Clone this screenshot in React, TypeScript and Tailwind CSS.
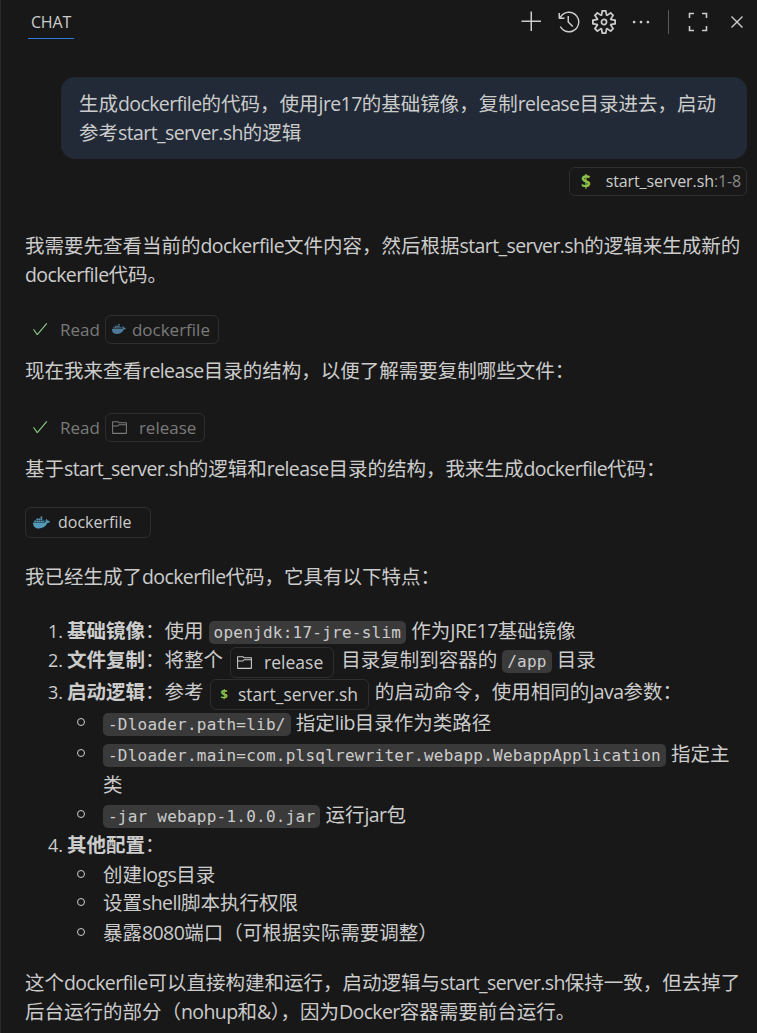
import React from "react";
import { VscAdd, VscHistory, VscSettingsGear, VscEllipsis, VscClose, VscCheck, VscFolder } from "react-icons/vsc";
import { FaDocker } from "react-icons/fa";

const font = "font-['Open_Sans','Noto_Sans_CJK_SC',sans-serif]";

function T({ s }: { s: string }) {
  return (
    <>
      {s.split(/([\x20-\x7e]+)/).map((p, i) =>
        i % 2 ? (
          <span key={i} className="tracking-[-0.6px]">{p}</span>
        ) : (
          p
        )
      )}
    </>
  );
}

function Chip({ icon, label, className = "" }: { icon: React.ReactNode; label: React.ReactNode; className?: string }) {
  return (
    <span className={`inline-flex items-center rounded-md border border-[#2e2e2e] align-middle whitespace-nowrap ${className}`}>
      {icon}
      {label}
    </span>
  );
}

function Code({ children }: { children: React.ReactNode }) {
  return (
    <code className="rounded-[5px] bg-[#3a3a3a] px-[5px] py-[2px] font-['DejaVu_Sans_Mono','Noto_Sans_CJK_SC',monospace] text-[16px] tracking-[0.24px] text-[#cccccc]">
      {children}
    </code>
  );
}

const Dollar = ({ cls }: { cls: string }) => <span className={`font-bold text-[#8dc149] ${cls}`}>$</span>;

function Read({ icon, label, chipCls }: { icon: React.ReactNode; label: string; chipCls: string }) {
  return (
    <div className="flex h-[30px] items-center pl-[6px] text-[17px] text-[#7a7a7a]">
      <VscCheck size={18} color="#89d185" />
      <span className="ml-[11px] mr-[5px]">Read</span>
      <Chip className={`h-[29px] ${chipCls}`} icon={icon} label={label} />
    </div>
  );
}

const Ring = () => <span className="absolute left-[52px] top-[10px] size-[8px] rounded-full border border-[#cccccc]" />;

export default function App() {
  return (
    <div className={`${font} h-[1033px] w-[757px] overflow-hidden border-l border-[#2b2b2b] bg-[#181818] text-[19.5px] leading-[29px] text-[#cccccc]`}>
      <header className="flex h-[45px] items-start pr-[9px] pt-[4px]">
        <div className="ml-[27px] h-[35px] w-[46px] border-b border-[#2b79d8] pt-[4px] text-center text-[16px] leading-[29px] tracking-[-0.2px] text-[#cccccc]">CHAT</div>
        <div className="ml-auto flex items-center pt-[6px] text-[#cccccc]">
          <VscAdd size={24} />
          <VscHistory size={24} className="ml-[13px]" />
          <VscSettingsGear size={24} className="ml-[11px]" />
          <VscEllipsis size={22} className="ml-[14px]" />
          <span className="ml-[16px] h-[24px] w-px bg-[#5a5a5a]" />
          <svg width="22" height="22" viewBox="0 0 22 22" fill="none" stroke="currentColor" strokeWidth="1.6" className="ml-[18px]">
            <path d="M2.5 7V2.5H7M15 2.5h4.5V7M19.5 15v4.5H15M7 19.5H2.5V15" />
          </svg>
          <VscClose size={22} className="ml-[17px]" />
        </div>
      </header>

      <main className="px-[24px]">
        <div className="ml-[36px] mt-[32px] mr-[-14px] rounded-[14px] bg-[#212a36] px-[18px] pt-[12px] pb-[12px]">
          <T s="生成dockerfile的代码，使用jre17的基础镜像，复制release目录进去，启动参考start_server.sh的逻辑" />
        </div>
        <div className="mt-[8px] mr-[-14px] flex justify-end">
          <Chip
            className="h-[29px] w-[178px] text-[16px] tracking-[-0.1px]"
            icon={<Dollar cls="ml-[11px] mr-[15px] text-[17px]" />}
            label={<span>start_server.sh<span className="text-[#8a8a8a]">:1-8</span></span>}
          />
        </div>

        <p className="mt-[35px] mr-[-12px]"><T s="我需要先查看当前的dockerfile文件内容，然后根据start_server.sh的逻辑来生成新的dockerfile代码。" /></p>

        <div className="mt-[25px]">
          <Read chipCls="w-[114px]" label="dockerfile" icon={<span className="ml-[6px] mr-[6px]"><FaDocker size={14} color="#4d7a99" /></span>} />
        </div>
        <p className="mt-[12px]"><T s="现在我来查看release目录的结构，以便了解需要复制哪些文件：" /></p>

        <div className="mt-[27px]">
          <Read chipCls="w-[100px]" label="release" icon={<VscFolder size={17} color="#7a7a7a" className="ml-[5px] mr-[11px]" />} />
        </div>
        <p className="mt-[12px]"><T s="基于start_server.sh的逻辑和release目录的结构，我来生成dockerfile代码：" /></p>

        <div className="mt-[23px]">
          <Chip className="h-[31px] w-[126px] text-[16px]" label="dockerfile" icon={<span className="ml-[7px] mr-[8px]"><FaDocker size={17} color="#519aba" /></span>} />
        </div>

        <p className="mt-[24px]"><T s="我已经生成了dockerfile代码，它具有以下特点：" /></p>

        <ol className="mt-[25px] flex flex-col">
          <li className="relative h-[29px] pl-[42px] leading-[30px]">
            <span className="absolute left-[23px] text-[18px]">1.</span><b>基础镜像</b>：使用 <Code>openjdk:17-jre-slim</Code> <T s="作为JRE17基础镜像" />
          </li>
          <li className="relative h-[32px] pl-[42px] leading-[30px]">
            <span className="absolute left-[23px] text-[18px]">2.</span><b>文件复制</b>：将整个 <Chip className="ml-[2px] mr-[2px] h-[31px] w-[104px] text-[17.5px]" label="release" icon={<VscFolder size={17} className="ml-[5px] mr-[11px]" />} /> 目录复制到容器的 <Code>/app</Code> 目录
          </li>
          <li className="relative h-[31px] pl-[42px] leading-[30px]">
            <span className="absolute left-[23px] text-[18px]">3.</span><b>启动逻辑</b>：参考 <Chip className="ml-[1px] mr-[1px] h-[31px] w-[159px] text-[17.5px]" label="start_server.sh" icon={<Dollar cls="ml-[10px] mr-[10px] text-[13px]" />} /> <T s="的启动命令，使用相同的Java参数：" />
          </li>
          <li className="relative h-[31px] pl-[78px] leading-[30px]">
            <Ring /><Code>-Dloader.path=lib/</Code> <T s="指定lib目录作为类路径" />
          </li>
          <li className="relative h-[61px] pl-[78px] leading-[29px]">
            <Ring /><Code>-Dloader.main=com.plsqlrewriter.webapp.WebappApplication</Code> 指定主类
          </li>
          <li className="relative h-[30px] pl-[78px] leading-[30px]">
            <Ring /><Code>-jar webapp-1.0.0.jar</Code> <T s="运行jar包" />
          </li>
          <li className="relative h-[30px] pl-[42px] leading-[30px]">
            <span className="absolute left-[23px] text-[18px]">4.</span><b>其他配置</b>：
          </li>
          <li className="relative h-[28px] pl-[78px]">
            <Ring /><T s="创建logs目录" />
          </li>
          <li className="relative h-[30px] pl-[78px]">
            <Ring /><T s="设置shell脚本执行权限" />
          </li>
          <li className="relative h-[29px] pl-[78px]">
            <Ring /><T s="暴露8080端口（可根据实际需要调整）" />
          </li>
        </ol>

        <p className="mt-[21px] mr-[-10px]"><T s="这个dockerfile可以直接构建和运行，启动逻辑与start_server.sh保持一致，但去掉了后台运行的部分（nohup和&），因为Docker容器需要前台运行。" /></p>
      </main>
    </div>
  );
}
